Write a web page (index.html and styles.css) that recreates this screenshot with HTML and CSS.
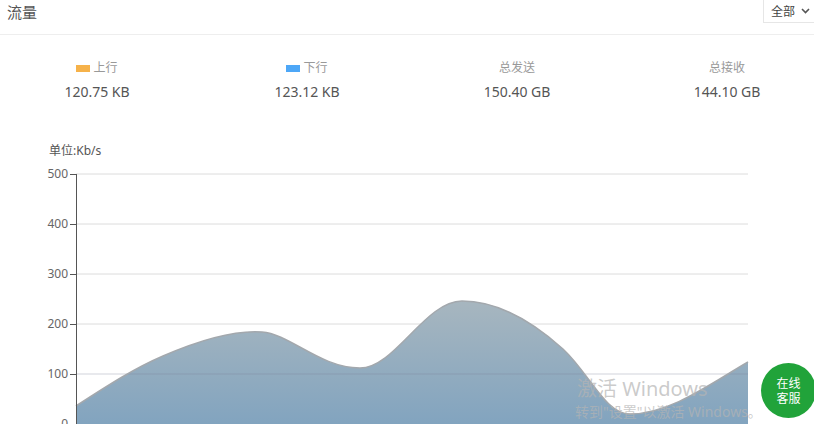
FILE: index.html
```html
<!DOCTYPE html>
<html lang="zh">
<head>
  <meta charset="UTF-8">
  <meta name="viewport" content="width=device-width, initial-scale=1.0">
  <title>流量</title>
  <link rel="stylesheet" href="styles.css">
</head>
<body>
  <div class="header">
    <div class="title">流量</div>
    <div class="select">全部
      <svg class="chevron" width="9" height="6" viewBox="0 0 9 6"><path d="M1 1 L4.5 4.5 L8 1" fill="none" stroke="#555" stroke-width="1.6"/></svg>
    </div>
  </div>

  <div class="stats">
    <div class="stat">
      <div class="label"><span class="dot up"></span>上行</div>
      <div class="value">120.75 KB</div>
    </div>
    <div class="stat">
      <div class="label"><span class="dot down"></span>下行</div>
      <div class="value">123.12 KB</div>
    </div>
    <div class="stat">
      <div class="label">总发送</div>
      <div class="value">150.40 GB</div>
    </div>
    <div class="stat">
      <div class="label">总接收</div>
      <div class="value">144.10 GB</div>
    </div>
  </div>

  <div class="chart">
    <div class="unit">单位:Kb/s</div>
    <svg class="plot" width="814" height="280" viewBox="0 0 814 280">
      <defs>
        <linearGradient id="fill" x1="0" y1="0" x2="0" y2="1">
          <stop offset="0" stop-color="#a7b6bf"/>
          <stop offset="1" stop-color="#7ca1bf"/>
        </linearGradient>
      </defs>
      <g class="grid">
        <line x1="76" y1="10" x2="748" y2="10"/>
        <line x1="76" y1="60" x2="748" y2="60"/>
        <line x1="76" y1="110" x2="748" y2="110"/>
        <line x1="76" y1="160" x2="748" y2="160"/>
        <line x1="76" y1="260" x2="748" y2="260"/>
      </g>
      <path class="area" d="M76,242 C110,220 135,204 163,192 C200,176 235,166 262,168 C290,170 320,204 360,204 C395,204 425,137 462,137 C500,137 535,160 563,185 C590,210 605,250 630,250 C670,250 710,220 748,198 L748,280 L76,280 Z"/>
      <line class="gridover" x1="76" y1="210" x2="748" y2="210"/>
      <path class="line" d="M76,242 C110,220 135,204 163,192 C200,176 235,166 262,168 C290,170 320,204 360,204 C395,204 425,137 462,137 C500,137 535,160 563,185 C590,210 605,250 630,250 C670,250 710,220 748,198"/>
      <g class="axis">
        <line x1="76.5" y1="10" x2="76.5" y2="280"/>
        <line x1="70" y1="10.5" x2="76" y2="10.5"/>
        <line x1="70" y1="60.5" x2="76" y2="60.5"/>
        <line x1="70" y1="110.5" x2="76" y2="110.5"/>
        <line x1="70" y1="160.5" x2="76" y2="160.5"/>
        <line x1="70" y1="210.5" x2="76" y2="210.5"/>
        <line x1="70" y1="260.5" x2="76" y2="260.5"/>
      </g>
      <g class="ticks">
        <text x="68" y="14">500</text>
        <text x="68" y="64">400</text>
        <text x="68" y="114">300</text>
        <text x="68" y="164">200</text>
        <text x="68" y="214">100</text>
        <text x="68" y="264">0</text>
      </g>
    </svg>
  </div>

  <div class="watermark">
    <div class="wm-big">激活 Windows</div>
    <div class="wm-small">转到"设置"以激活 Windows。</div>
  </div>

  <div class="service">在线<br>客服</div>
</body>
</html>
```

FILE: styles.css
```css
html, body {
  margin: 0;
  overflow: hidden;
}
body {
  font-family: "Noto Sans", "Noto Sans CJK SC", sans-serif;
  background: #fff;
  color: #555;
  width: 814px;
  height: 424px;
  position: relative;
}
.header {
  display: flex;
  justify-content: space-between;
  align-items: flex-start;
  height: 34px;
  border-bottom: 1px solid #eee;
}
.title {
  font-size: 15px;
  line-height: 24px;
  padding-left: 7px;
  color: #555;
}
.select {
  display: flex;
  align-items: center;
  gap: 6px;
  height: 22px;
  padding: 0 4px 0 7px;
  border-left: 1px solid #e6e6e6;
  border-bottom: 1px solid #e6e6e6;
  font-size: 12px;
  color: #444;
}
.stats {
  display: grid;
  grid-template-columns: repeat(4, 210px);
  margin-left: -8px;
  padding-top: 25px;
}
.stat {
  text-align: center;
}
.label {
  font-size: 12px;
  line-height: 16px;
  color: #999;
  display: flex;
  justify-content: center;
  align-items: center;
}
.dot {
  display: inline-block;
  width: 14px;
  height: 7px;
  margin-right: 3px;
}
.dot.up {
  background: #f6b24a;
}
.dot.down {
  background: #4da7f7;
}
.value {
  font-size: 14px;
  line-height: 20px;
  margin-top: 6px;
  color: #555;
}
.chart {
  padding-top: 42px;
}
.unit {
  font-size: 12px;
  line-height: 14px;
  padding-left: 49px;
  color: #555;
}
.plot {
  display: block;
  margin-top: 6px;
}
.grid line, .gridover {
  stroke: #dcdcdc;
  stroke-width: 1;
}
.gridover {
  stroke: rgba(120, 130, 150, 0.35);
}
.area {
  fill: url(#fill);
}
.line {
  fill: none;
  stroke: #a3a8ad;
  stroke-width: 1.5;
}
.axis line {
  stroke: #555;
  stroke-width: 1;
}
.ticks text {
  font-family: "Noto Sans", sans-serif;
  font-size: 12px;
  fill: #666;
  text-anchor: end;
}
.watermark {
  position: absolute;
  left: 577px;
  top: 376px;
  color: rgba(180, 180, 180, 0.7);
  white-space: nowrap;
}
.wm-big {
  font-size: 20px;
  line-height: 26px;
}
.wm-small {
  font-size: 14px;
  line-height: 20px;
  margin-left: -2px;
}
.service {
  position: absolute;
  left: 761px;
  top: 363px;
  width: 55px;
  height: 55px;
  border-radius: 50%;
  background: #21a33a;
  color: #fff;
  font-size: 12px;
  line-height: 15px;
  display: flex;
  align-items: center;
  justify-content: center;
  text-align: center;
}
```
